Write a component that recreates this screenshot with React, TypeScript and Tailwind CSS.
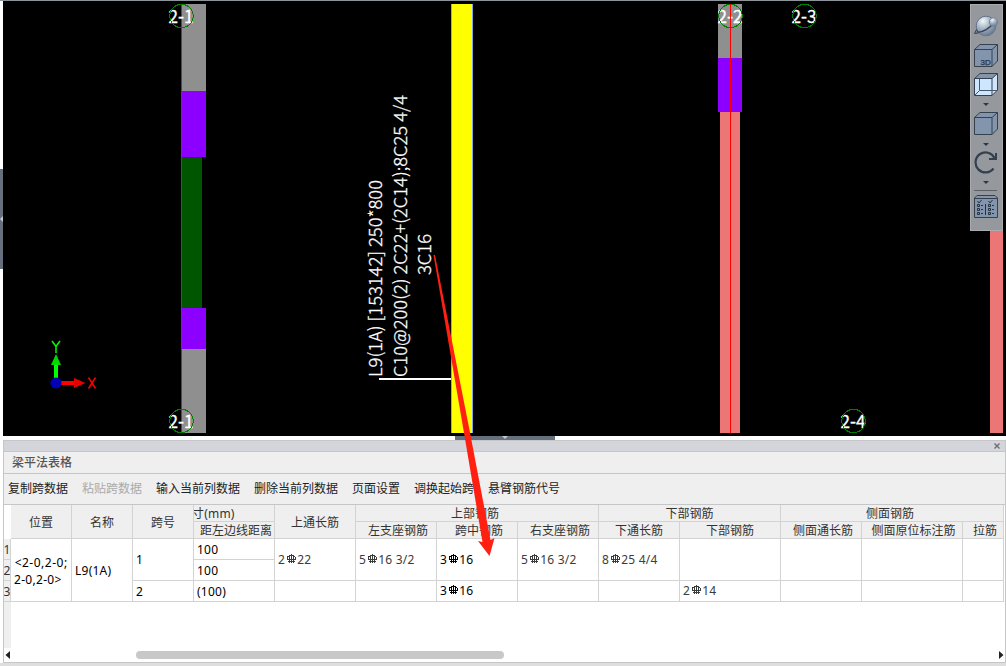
import React from "react";

const CJK = "font-['Noto_Sans','Noto_Sans_CJK_SC',sans-serif]";

const gridLabels = [
  { x: 181, y: 16, text: "2-1" },
  { x: 730, y: 16, text: "2-2" },
  { x: 804, y: 16, text: "2-3" },
  { x: 181, y: 421, text: "2-1" },
  { x: 853, y: 421, text: "2-4" },
];

const annotations = [
  { x: 382, y: 377, len: 197, text: "L9(1A) [153142] 250*800" },
  { x: 407, y: 377, len: 282, text: "C10@200(2) 2C22+(2C14);8C25 4/4" },
  { x: 431, y: 275, len: 41, text: "3C16" },
];

function Drawing() {
  return (
    <svg width="1003" height="435" viewBox="3 1 1003 435" className="block bg-black" shapeRendering="crispEdges">
      <rect x="181" y="4" width="1" height="429" fill="#ff0000" />
      <rect x="182" y="4" width="24" height="87" fill="#8f8f8f" />
      <rect x="182" y="91" width="24" height="66" fill="#8b00ff" />
      <rect x="182" y="157" width="20" height="151" fill="#005500" />
      <rect x="182" y="308" width="24" height="41" fill="#8b00ff" />
      <rect x="182" y="349" width="24" height="84" fill="#8f8f8f" />

      <rect x="451" y="4" width="22" height="429" fill="#7fa8e8" />
      <rect x="452" y="4" width="20" height="429" fill="#ffff00" />
      <rect x="379" y="378" width="72" height="2" fill="#ffffff" />

      <rect x="718" y="4" width="24" height="54" fill="#8f8f8f" />
      <rect x="718" y="58" width="24" height="54" fill="#8b00ff" />
      <rect x="720" y="112" width="20" height="321" fill="#ec7676" />
      <rect x="990" y="230" width="13" height="203" fill="#ec7676" />

      {gridLabels.map((l) => (
        <g key={`${l.text}-${l.x}-${l.y}`}>
          <text
            x={l.x - 12.5}
            y={l.y + 6.5}
            fill="#fff"
            stroke="#fff"
            strokeWidth="0.300"
            textLength={25}
            lengthAdjust="spacingAndGlyphs"
            className="font-['Noto_Sans_CJK_SC',sans-serif] text-[18px]"
          >
            {l.text}
          </text>
          <circle cx={l.x + 0.5} cy={l.y} r="11.7" fill="none" stroke="#008000" />
        </g>
      ))}
      <rect x="730" y="4" width="1" height="429" fill="#ff0000" />

      {annotations.map((a) => (
        <text
          key={a.text}
          transform={`translate(${a.x} ${a.y}) rotate(-90)`}
          fill="#fff"
          stroke="#fff"
          strokeWidth="0.300"
          textLength={a.len}
          lengthAdjust="spacingAndGlyphs"
          className="font-['Noto_Sans_CJK_SC',sans-serif] text-[18px] font-light"
        >
          {a.text}
        </text>
      ))}

      <g shapeRendering="auto">
        <rect x="54" y="364" width="4" height="16" fill="#00ff00" />
        <path d="M56 354 L61 365 H51 Z" fill="#00d800" />
        <rect x="60" y="381" width="15" height="4" fill="#ff0000" />
        <path d="M85.5 383 L74 378 V388 Z" fill="#e60000" />
        <circle cx="56" cy="383" r="5.6" fill="#0000b4" />
        <path d="M52 341 L56 346.500 L60 341 M56 346.500 V353" fill="none" stroke="#00ff00" strokeWidth="1.500" />
        <path d="M88.500 377.500 L95.500 388.500 M95.500 377.500 L88.500 388.500" fill="none" stroke="#ff0000" strokeWidth="1.400" />
      </g>
    </svg>
  );
}

function Cube({ light = false, label }: { light?: boolean; label?: string }) {
  return (
    <svg width="24" height="24" viewBox="0 0 24 24" className="block shrink-0">
      <path d="M0.5 5.5 L6 0.5 H23.500 V17 L18 22.500 H0.500 Z" fill={light ? "#cfe6ff" : "#8395ad"} />
      {light && <path d="M0.500 5.500 L6 0.500 H23.500 L18 5.500 Z" fill="#8395ad" />}
      <path
        d="M0.500 5.500 L6 0.500 H23.500 V17 L18 22.500 H0.500 Z M0.500 5.500 H18 V22.500 M18 5.500 L23.500 0.500"
        fill="none"
        stroke="#35404f"
      />
      {light && <path d="M5.500 6 V17.500 H23 M5.500 17.500 L1 22" fill="none" stroke="#4a5869" />}
      {label && (
        <text x="6.500" y="21" fill="#273241" stroke="#273241" strokeWidth="0.250" className="font-['Liberation_Sans',sans-serif] text-[8px]">
          {label}
        </text>
      )}
    </svg>
  );
}

function Caret() {
  return (
    <svg width="6" height="3" viewBox="0 0 6 3" className="block shrink-0">
      <path d="M0 0 H6 L3 3 Z" fill="#2d3846" />
    </svg>
  );
}

function ViewTools() {
  return (
    <div className="absolute left-[970px] top-1 flex h-[227px] w-[33px] flex-col items-center border border-[#a9abae] bg-[#95989d] pr-[2px]">
      <svg width="26" height="24" viewBox="0 0 26 24" className="mt-[9px] block shrink-0">
        <defs>
          <radialGradient id="ball" cx="0.35" cy="0.25" r="0.8">
            <stop offset="0" stopColor="#f4f8fb" />
            <stop offset="0.45" stopColor="#a9b8c8" />
            <stop offset="1" stopColor="#62758d" />
          </radialGradient>
        </defs>
        <circle cx="13" cy="12" r="9.800" fill="url(#ball)" stroke="#65758a" />
        <path d="M4 18.500 C10 18.500 17 14 20.500 9" fill="none" stroke="#3a4656" strokeWidth="1.500" />
        <path d="M1.500 19.500 L3.500 15.500 L5.500 19 Z" fill="#79828f" stroke="#3a4656" />
        <circle cx="20.500" cy="8" r="4.200" fill="url(#ball)" stroke="#74859a" />
      </svg>
      <div className="mt-[6px]"><Cube label="3D" /></div>
      <div className="mt-[5px]"><Cube light /></div>
      <div className="mt-[6px]"><Caret /></div>
      <div className="mt-[6px]"><Cube /></div>
      <div className="mt-[7px]"><Caret /></div>
      <svg width="24" height="24" viewBox="0 0 24 24" className="mt-[5px] block shrink-0">
        <path d="M19.500 17.500 A10 10 0 1 1 20.500 7" fill="none" stroke="#35404f" strokeWidth="2.200" />
        <path d="M22 2 V8 H15" fill="none" stroke="#35404f" strokeWidth="2" />
      </svg>
      <div className="mt-[6px]"><Caret /></div>
      <div className="mt-[6px] h-px w-[23px] shrink-0 bg-[#5b6066]" />
      <svg width="24" height="24" viewBox="0 0 24 24" className="mt-[4px] block shrink-0">
        <path d="M0.500 3 L3 0.500 H21 L23.500 3 V22.500 H0.500 Z" fill="#8395ad" stroke="#35404f" />
        <path d="M0.500 3.500 H23.500" stroke="#35404f" />
        <g fill="none" stroke="#273241">
          <path d="M3.500 6 L5 8 L7.500 5 M14.500 6 L16 8 L18.500 5 M11.500 9 V20" />
          <path d="M3.500 9.500 H5.500 V11.500 H3.500 Z M3.500 13.500 H5.500 V15.500 H3.500 Z M3.500 17.500 H5.500 V19.500 H3.500 Z M14.500 9.500 H16.500 V11.500 H14.500 Z M14.500 13.500 H16.500 V15.500 H14.500 Z M14.500 17.500 H16.500 V19.500 H14.500 Z" />
          <path d="M7 10.500 H9 M7 14.500 H9 M7 18.500 H9 M18 10.500 H20 M18 14.500 H20 M18 18.500 H20" />
        </g>
      </svg>
    </div>
  );
}

function RebarMark() {
  return (
    <svg width="12" height="9" viewBox="0 0 12 9" className="mb-[3px] block shrink-0" shapeRendering="crispEdges">
      <path
        d="M6 0 H7 V9 H6 Z M4 1 H9 V2 H4 Z M2 2 H4 V3 H2 Z M9 2 H10 V3 H9 Z M2 3 H3 V5 H2 Z M10 3 H11 V5 H10 Z M2 5 H11 V6 H2 Z M4 2 H5 V9 H4 Z M8 2 H9 V9 H8 Z M3 7 H10 V8 H3 Z"
        fill="currentColor"
      />
    </svg>
  );
}

function Rebar({ count, rest, strong }: { count: string; rest: string; strong?: boolean }) {
  return (
    <span className={`-mt-px flex items-center whitespace-pre ${strong ? "text-black" : "text-[#3c3c3c]"}`}>
      {count}
      <RebarMark />
      {rest}
    </span>
  );
}

const HEAD = "flex items-center justify-center overflow-hidden whitespace-nowrap border-b border-r border-[#d3d3d3] bg-[#efefef] pt-[2px] text-[#333]";
const CELL = "flex items-center whitespace-nowrap border-b border-r border-[#d3d3d3] bg-white pl-[3px] pt-px tracking-[0.25px] text-black";

function BeamTable() {
  return (
    <div className="grid w-[1000px] grid-cols-[7px_61px_61px_61px_81px_81px_81px_81px_81px_81px_101px_81px_101px_41px] grid-rows-[17px_17px_21px_21px_21px] text-[12px] leading-[16px]">
      <div className="col-start-1 row-span-2 row-start-1 bg-white" />
      <div className={`${HEAD} col-start-2 row-span-2 row-start-1`}>位置</div>
      <div className={`${HEAD} col-start-3 row-span-2 row-start-1`}>名称</div>
      <div className={`${HEAD} col-start-4 row-span-2 row-start-1`}>跨号</div>
      <div className={`${HEAD} col-start-5 row-start-1 !justify-start`}><span className="-ml-[2px] tracking-[0.2px]">寸(mm)</span></div>
      <div className={`${HEAD} col-start-5 row-start-2 pl-[4px]`}>距左边线距离</div>
      <div className={`${HEAD} col-start-6 row-span-2 row-start-1`}>上通长筋</div>
      <div className={`${HEAD} col-span-3 col-start-7 row-start-1 pr-1`}>上部钢筋</div>
      <div className={`${HEAD} col-start-7 row-start-2 pl-1`}>左支座钢筋</div>
      <div className={`${HEAD} col-start-8 row-start-2 pl-1`}>跨中钢筋</div>
      <div className={`${HEAD} col-start-9 row-start-2 pl-1`}>右支座钢筋</div>
      <div className={`${HEAD} col-span-2 col-start-10 row-start-1`}>下部钢筋</div>
      <div className={`${HEAD} col-start-10 row-start-2`}>下通长筋</div>
      <div className={`${HEAD} col-start-11 row-start-2`}>下部钢筋</div>
      <div className={`${HEAD} col-span-3 col-start-12 row-start-1 pr-1`}>侧面钢筋</div>
      <div className={`${HEAD} col-start-12 row-start-2 pl-1`}>侧面通长筋</div>
      <div className={`${HEAD} col-start-13 row-start-2 pl-[3px]`}>侧面原位标注筋</div>
      <div className={`${HEAD} col-start-14 row-start-2 pl-1`}>拉筋</div>

      <div className={`${HEAD} col-start-1 row-start-3`}>1</div>
      <div className={`${HEAD} col-start-1 row-start-4`}>2</div>
      <div className={`${HEAD} col-start-1 row-start-5`}>3</div>

      <div className={`${CELL} col-start-2 row-span-3 row-start-3 !items-start !pt-[15px] leading-[17px] !tracking-[0.5px]`}>
        <span>&nbsp;<span className="-ml-[3px]">&lt;2-0,2-0;</span><br /><span className="tracking-[0.3px]">2-0,2-0&gt;</span></span>
      </div>
      <div className={`${CELL} col-start-3 row-span-3 row-start-3 !pt-[2px]`}>L9(1A)</div>
      <div className={`${CELL} col-start-4 row-span-2 row-start-3`}>1</div>
      <div className={`${CELL} col-start-4 row-start-5 !pt-[2px]`}>2</div>
      <div className={`${CELL} col-start-5 row-start-3 !pt-[2px]`}>100</div>
      <div className={`${CELL} col-start-5 row-start-4 !pt-[2px]`}>100</div>
      <div className={`${CELL} col-start-5 row-start-5 !pt-[2px]`}>(100)</div>

      <div className={`${CELL} col-start-6 row-span-2 row-start-3`}><Rebar count="2" rest="22" /></div>
      <div className={`${CELL} col-start-7 row-span-2 row-start-3`}><Rebar count="5" rest="16 3/2" /></div>
      <div className={`${CELL} col-start-8 row-span-2 row-start-3`}><Rebar count="3" rest="16" strong /></div>
      <div className={`${CELL} col-start-9 row-span-2 row-start-3`}><Rebar count="5" rest="16 3/2" /></div>
      <div className={`${CELL} col-start-10 row-span-2 row-start-3`}><Rebar count="8" rest="25 4/4" /></div>
      <div className={`${CELL} col-start-11 row-span-2 row-start-3`} />
      <div className={`${CELL} col-start-12 row-span-2 row-start-3`} />
      <div className={`${CELL} col-start-13 row-span-2 row-start-3`} />
      <div className={`${CELL} col-start-14 row-span-2 row-start-3`} />

      <div className={`${CELL} col-start-6 row-start-5`} />
      <div className={`${CELL} col-start-7 row-start-5`} />
      <div className={`${CELL} col-start-8 row-start-5`}><Rebar count="3" rest="16" strong /></div>
      <div className={`${CELL} col-start-9 row-start-5`} />
      <div className={`${CELL} col-start-10 row-start-5`} />
      <div className={`${CELL} col-start-11 row-start-5`}><Rebar count="2" rest="14" /></div>
      <div className={`${CELL} col-start-12 row-start-5`} />
      <div className={`${CELL} col-start-13 row-start-5`} />
      <div className={`${CELL} col-start-14 row-start-5`} />
    </div>
  );
}

const actions = [
  { label: "复制跨数据" },
  { label: "粘贴跨数据", disabled: true },
  { label: "输入当前列数据" },
  { label: "删除当前列数据" },
  { label: "页面设置" },
  { label: "调换起始跨" },
  { label: "悬臂钢筋代号" },
];

export default function App() {
  return (
    <div className={`relative flex h-[666px] w-[1006px] flex-col overflow-hidden bg-white ${CJK}`}>
      <div className="h-px shrink-0 bg-[#8d949a]" />
      <div className="flex h-[435px] shrink-0">
        <div className="flex w-[3px] shrink-0 flex-col pt-[168px]">
          <div className="flex h-[100px] items-center bg-[#66707c]">
            <svg width="3" height="6" viewBox="0 0 3 6" className="block"><path d="M3 0 V6 L0 3 Z" fill="#c3c7cb" /></svg>
          </div>
        </div>
        <Drawing />
      </div>
      <ViewTools />
      <div className="flex h-1 shrink-0 pl-[455px]">
        <div className="flex w-[100px] justify-center bg-[#66707c]">
          <svg width="6" height="3" viewBox="0 0 6 3" className="block"><path d="M0 0 H6 L3 3 Z" fill="#c3c7cb" /></svg>
        </div>
      </div>

      <div className="ml-[3px] flex h-[223px] shrink-0 flex-col border-x border-y border-[#c5c6c8]">
        <div className="flex h-[11px] shrink-0 items-center justify-end border-b border-[#c5c6c8] bg-[#d4d5db] pr-[5px]">
          <svg width="6" height="6" viewBox="0 0 6 6" className="block"><path d="M0.500 0.500 L5.500 5.500 M5.500 0.500 L0.500 5.500" stroke="#6d6d70" strokeWidth="1.400" /></svg>
        </div>
        <div className="flex h-[22px] shrink-0 items-center border-b border-[#c5c6c8] bg-[#efefef] pl-2 text-[12px] font-medium text-[#555]">梁平法表格</div>
        <div className="flex h-[31px] shrink-0 items-center gap-[14px] border-b border-[#c5c6c8] bg-[#efefef] pl-1 text-[12px]">
          {actions.map((a) => (
            <span key={a.label} className={a.disabled ? "whitespace-nowrap text-[#aaaaaa]" : "whitespace-nowrap text-[#222]"}>{a.label}</span>
          ))}
        </div>
        <BeamTable />
        <div className="flex min-h-0 flex-1">
          <div className="mb-[14px] w-[7px] bg-[#efefef]" />
        </div>
      </div>
      <div className="h-[3px] shrink-0 bg-[#dedede]" />

      <div className="absolute bottom-[4px] left-1 flex h-[14px] w-[1001px] items-center justify-between px-px">
        <svg width="5" height="8" viewBox="0 0 5 8" className="block"><path d="M5 0 V8 L0.500 4 Z" fill="#222" /></svg>
        <div className="-ml-[370px] h-2 w-[368px] rounded-full bg-[#c8c8c8]" />
        <svg width="5" height="8" viewBox="0 0 5 8" className="block"><path d="M0 0 V8 L4.500 4 Z" fill="#222" /></svg>
      </div>

      <svg width="1006" height="666" viewBox="0 0 1006 666" className="pointer-events-none absolute inset-0">
        <path d="M433.500 255 L435 255 L469.500 430 L490.500 540 L494.500 538 L489.500 556 L478 541 L482.500 542 L463.500 430 Z" fill="#ff2011" />
      </svg>
    </div>
  );
}
